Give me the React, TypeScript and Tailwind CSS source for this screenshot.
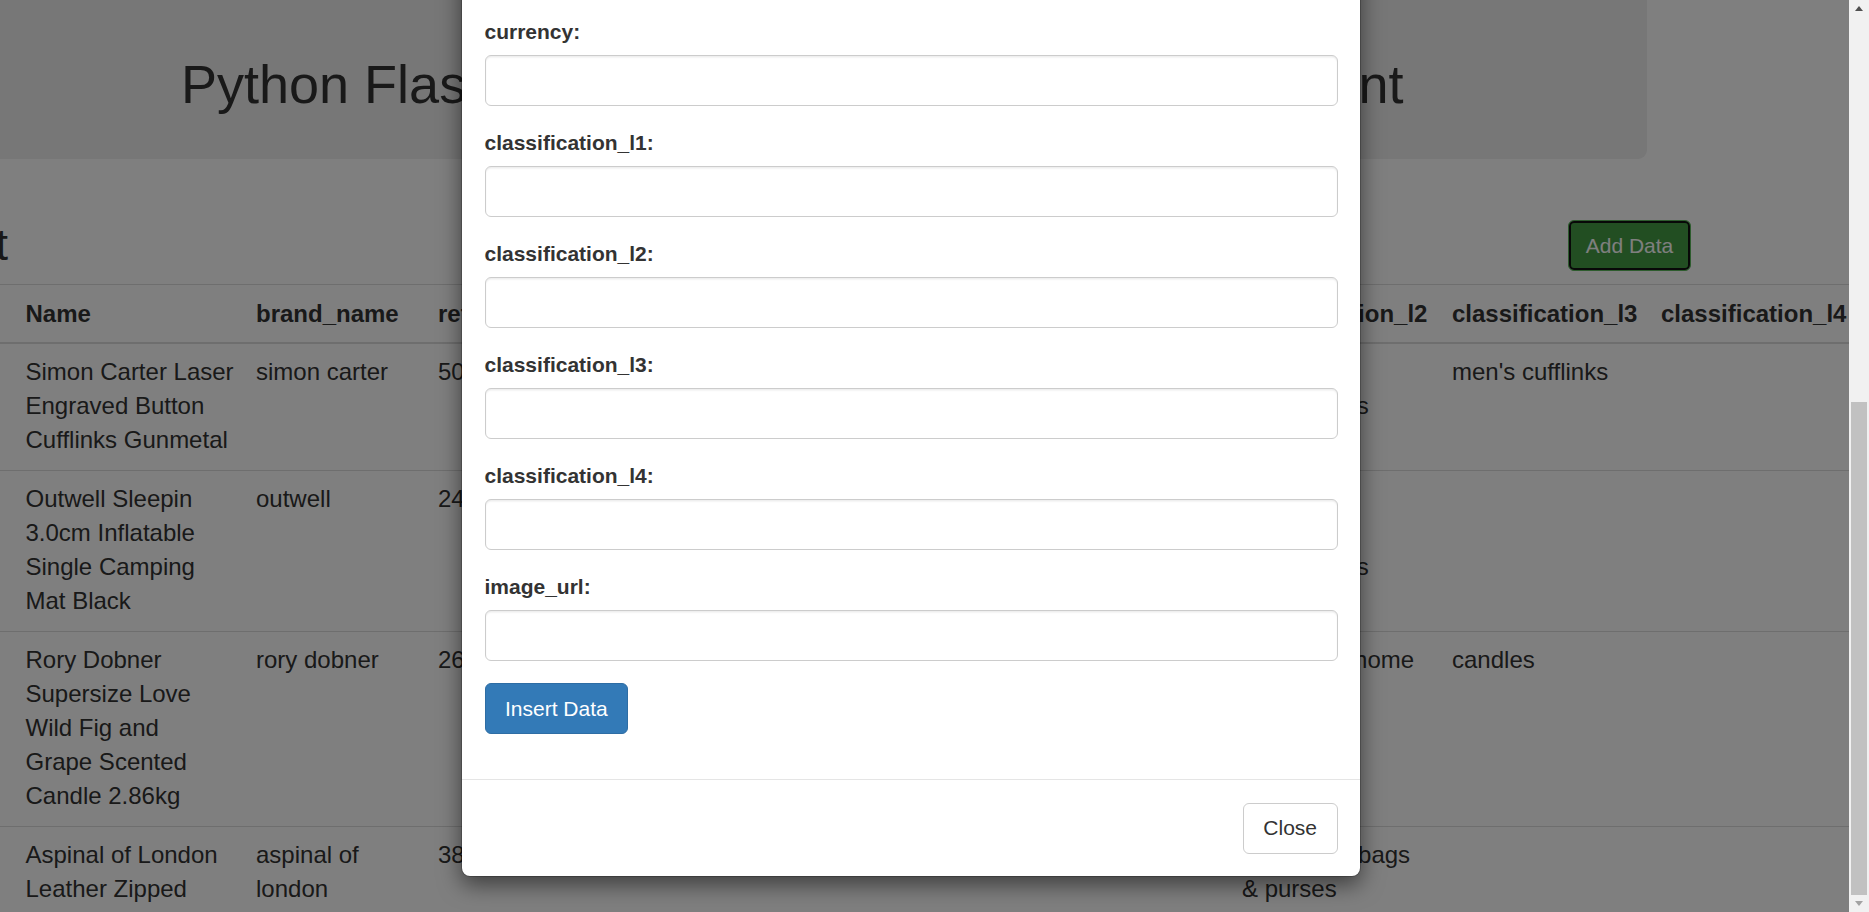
import React from 'react'

type Row = {
    name: string
    brand: string
    price: string
    currency: string
    l1: string
    l2: string
    l3: string
    l4: string
    image: string
}

const rows: Row[] = [
    {
        name: 'Simon Carter Laser\nEngraved Button\nCufflinks Gunmetal',
        brand: 'simon carter', price: '50.00', currency: 'GBP',
        l1: 'accessories', l2: "men's accessories", l3: "men's cufflinks", l4: '', image: '',
    },
    {
        name: 'Outwell Sleepin\n3.0cm Inflatable\nSingle Camping\nMat Black',
        brand: 'outwell', price: '24.99', currency: 'GBP',
        l1: 'sports', l2: 'outdoor recreation accessories', l3: '', l4: '', image: '',
    },
    {
        name: 'Rory Dobner\nSupersize Love\nWild Fig and\nGrape Scented\nCandle 2.86kg',
        brand: 'rory dobner', price: '260.00', currency: 'GBP',
        l1: 'home', l2: 'candles & home fragrance', l3: 'candles', l4: '', image: '',
    },
    {
        name: 'Aspinal of London\nLeather Zipped\nTravel Wallet\nBlack',
        brand: 'aspinal of london', price: '38.00', currency: 'GBP',
        l1: 'accessories', l2: 'crossbody bags & purses', l3: '', l4: '', image: '',
    },
]

const headers = [
    'Name', 'brand_name', 'retail_price', 'currency', 'classification_l1',
    'classification_l2', 'classification_l3', 'classification_l4', 'image_url',
]

const colWidths = ['w-[264px]', 'w-[182px]', 'w-[240px]', 'w-[180px]', 'w-[384px]', 'w-[210px]', 'w-[209px]', 'w-[232px]', 'w-[400px]']

const modalFields = [
    'Name', 'brand_name', 'retail_price', 'currency', 'classification_l1',
    'classification_l2', 'classification_l3', 'classification_l4', 'image_url',
]

const FormField = ({ label }: { label: string }) => (
    <div className='mb-[22.5px]'>
        <label className='inline-block mb-[7.5px] font-bold text-[21px] leading-[30px] text-[#333]'>{label}:</label>
        <input
            type='text'
            className='block w-full h-[51px] px-[18px] py-[9px] text-[21px] leading-[30px] text-[#555] bg-white border-[1.5px] border-[#ccc] rounded-[6px] shadow-[inset_0_1.5px_1.5px_rgba(0,0,0,0.075)] outline-none'
        />
    </div>
)

const Scrollbar = () => (
    <div className='w-[20px] h-[912px] bg-[#f1f1f1] flex flex-col'>
        <div className='h-[17px] flex items-center justify-center'>
            <svg width='8' height='5' viewBox='0 0 8 5'><polygon points='4,0 8,5 0,5' fill='#505050' /></svg>
        </div>
        <div className='h-[385px]' />
        <div className='h-[493px] mx-[2px] bg-[#c1c1c1]' />
        <div className='h-[17px] flex items-center justify-center'>
            <svg width='8' height='5' viewBox='0 0 8 5'><polygon points='0,0 8,0 4,5' fill='#a3a3a3' /></svg>
        </div>
    </div>
)

export default function App() {
    return (
        <div className="flex w-full h-[912px] overflow-hidden bg-white font-['Liberation_Sans',Arial,sans-serif]">
            <div className='relative w-[1849px] h-[912px] overflow-hidden text-[#333]'>
                {/* page under the dialog, scrolled sideways */}
                <div className='-mt-[20px] -ml-[20px] w-[1667px] h-[179px] rounded-[9px] bg-[#eee] pl-[201px] pt-[74.5px]'>
                    <h1 className='text-[54px] leading-[59px] whitespace-nowrap'>Python Flask MySQL CRUD: Product Management</h1>
                </div>

                <div className='mt-[61px] flex items-start h-[51px]'>
                    <div className='w-[8px] flex justify-end'>
                        <h2 className='text-[45px] leading-[49.5px] whitespace-nowrap'>Product List</h2>
                    </div>
                    <button className='ml-[1560px] w-[123px] h-[51px] rounded-[6px] border-[1.5px] border-[#5cb85c] bg-[#449d44] shadow-[inset_0_0_0_2px_#101010] text-white text-[21px] leading-[30px]'>
                        Add Data
                    </button>
                </div>

                <table className='mt-[13px] -ml-[20px] w-[2301px] table-fixed border-collapse text-[24px] leading-[34px]'>
                    <colgroup>
                        {colWidths.map((w, i) => <col key={i} className={w} />)}
                    </colgroup>
                    <thead>
                        <tr>
                            {headers.map((h) => (
                                <th key={h} className='px-[12px] first:pl-[45.5px] pt-[12px] pb-[11px] text-left font-bold whitespace-nowrap align-bottom border-t border-b-2 border-[#ddd]'>{h}</th>
                            ))}
                        </tr>
                    </thead>
                    <tbody>
                        {rows.map((r) => (
                            <tr key={r.name}>
                                {[r.name, r.brand, r.price, r.currency, r.l1, r.l2, r.l3, r.l4, r.image].map((v, i) => (
                                    <td key={i} className='px-[12px] first:pl-[45.5px] first:whitespace-pre pt-[11px] pb-[13px] align-top border-t border-[#ddd] whitespace-pre-line'>{v}</td>
                                ))}
                            </tr>
                        ))}
                    </tbody>
                </table>

                {/* backdrop */}
                <div className='absolute inset-0 bg-black/50' />

                {/* dialog */}
                <div className='absolute left-[461px] top-[-424px] w-[900px] bg-white bg-clip-padding border-[1.5px] border-black/20 rounded-[9px] shadow-[0_7.5px_22.5px_rgba(0,0,0,0.5)]'>
                    <div className='flex items-center justify-between p-[22.5px] border-b-[1.5px] border-[#e5e5e5]'>
                        <h4 className='text-[27px] leading-[38.5px] text-[#333]'>Add Data</h4>
                        <span className='text-[31.5px] leading-none font-bold text-black opacity-20'>×</span>
                    </div>
                    <div className='p-[22.5px]'>
                        {modalFields.map((f) => <FormField key={f} label={f} />)}
                        <div className='mb-[22.5px]'>
                            <button className='h-[51px] px-[19.5px] rounded-[6px] border-[1.5px] border-[#2e6da4] bg-[#337ab7] text-white text-[21px] leading-[30px]'>
                                Insert Data
                            </button>
                        </div>
                    </div>
                    <div className='flex justify-end p-[22.5px] border-t-[1.5px] border-[#e5e5e5]'>
                        <button className='h-[51px] px-[19.5px] rounded-[6px] border-[1.5px] border-[#ccc] bg-white text-[#333] text-[21px] leading-[30px]'>
                            Close
                        </button>
                    </div>
                </div>
            </div>
            <Scrollbar />
        </div>
    )
}
